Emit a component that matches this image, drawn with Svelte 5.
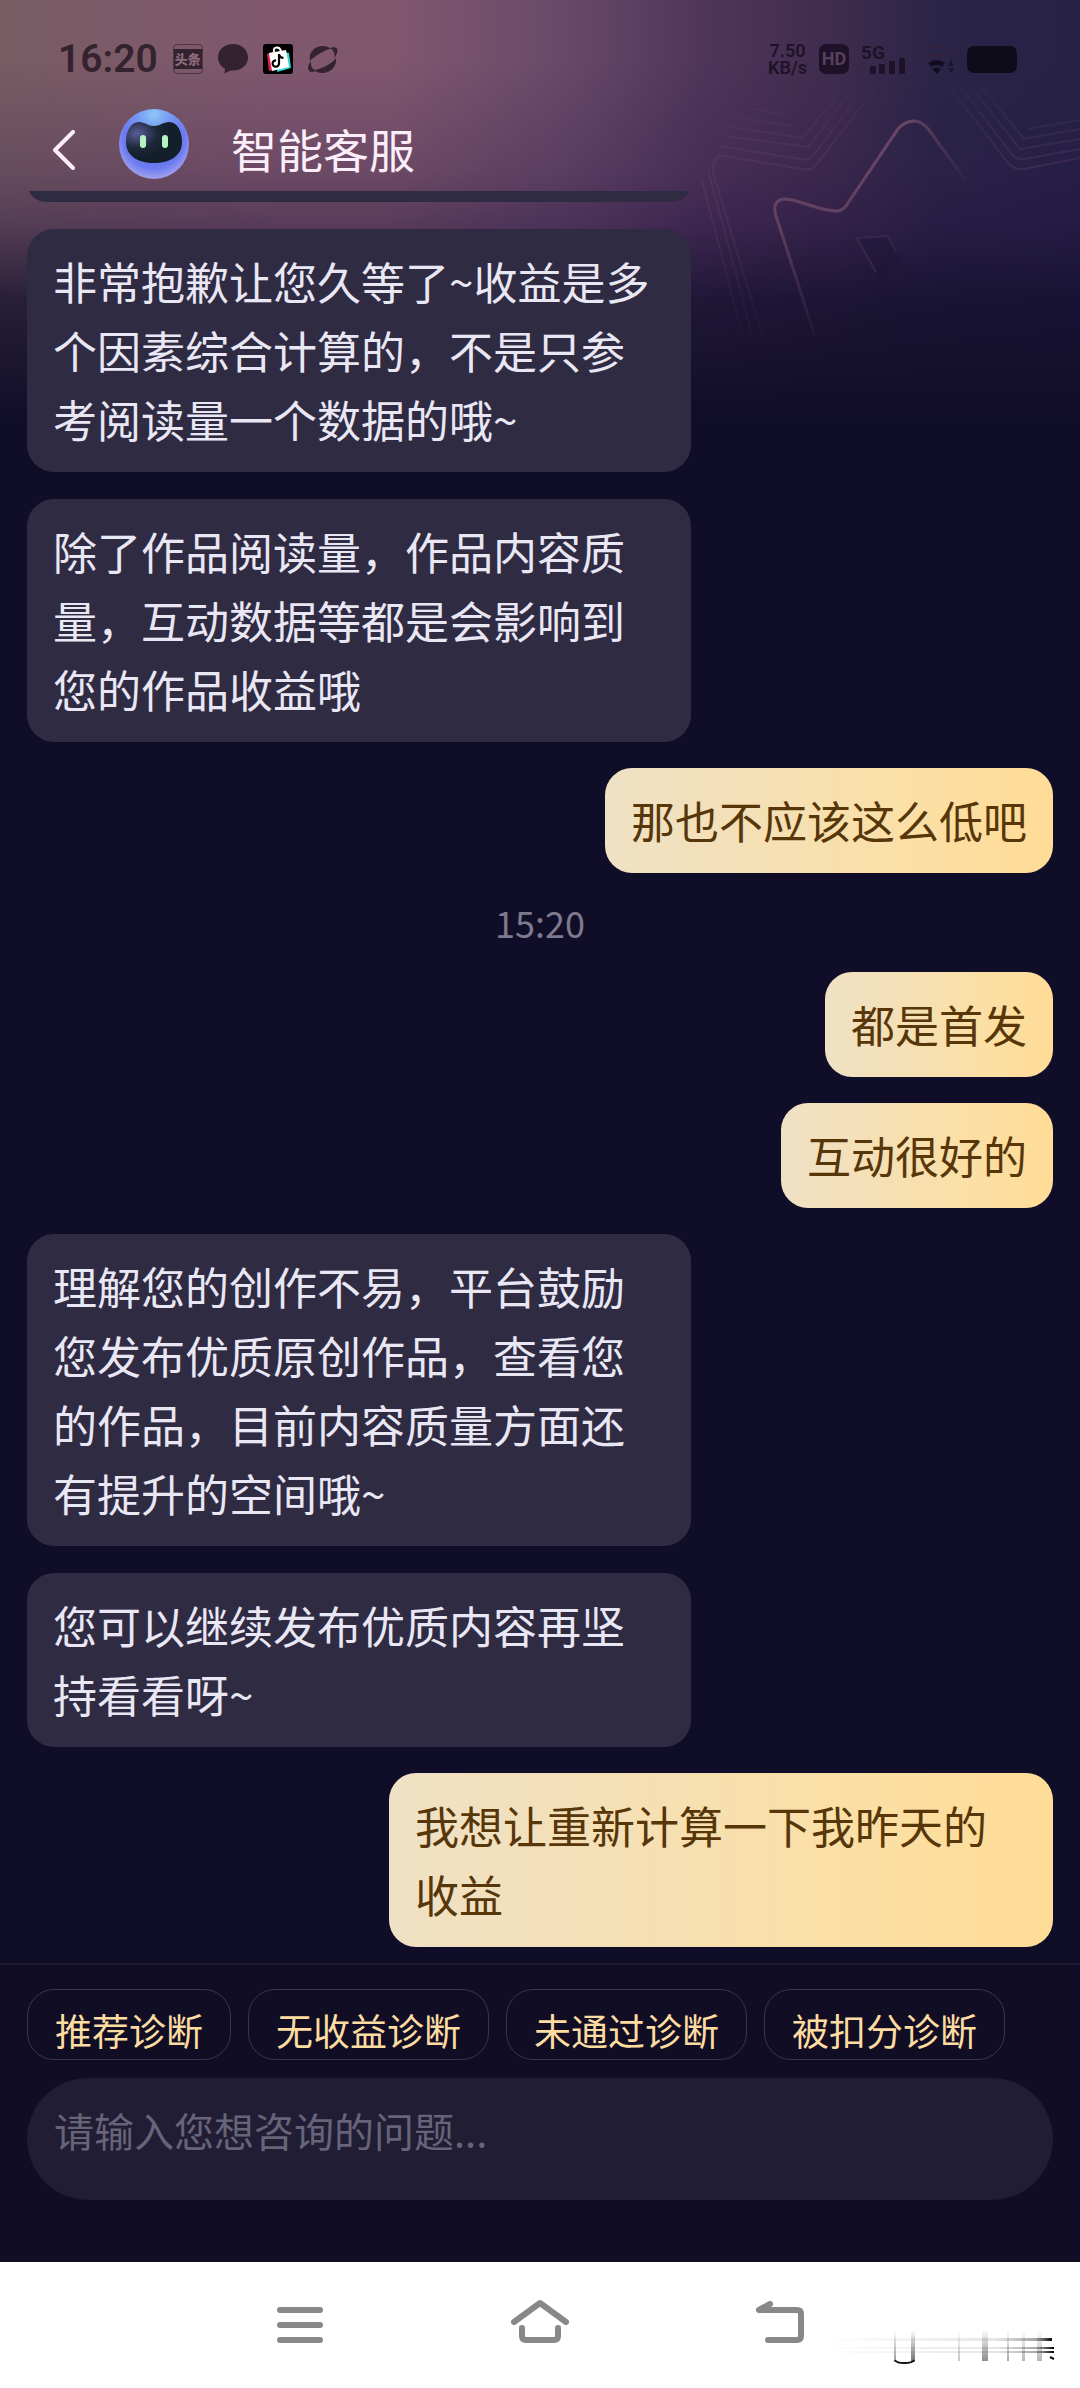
<script>
    let draft = '';

    const messages = [
      { from: 'agent', cut: true, text: '' },
      { from: 'agent', text: '非常抱歉让您久等了~收益是多个因素综合计算的，不是只参考阅读量一个数据的哦~' },
      { from: 'agent', text: '除了作品阅读量，作品内容质量，互动数据等都是会影响到您的作品收益哦' },
      { from: 'user', text: '那也不应该这么低吧' },
      { from: 'time', text: '15:20' },
      { from: 'user', text: '都是首发' },
      { from: 'user', text: '互动很好的' },
      { from: 'agent', text: '理解您的创作不易，平台鼓励您发布优质原创作品，查看您的作品，目前内容质量方面还有提升的空间哦~' },
      { from: 'agent', text: '您可以继续发布优质内容再坚持看看呀~' },
      { from: 'user', text: '我想让重新计算一下我昨天的收益' }
    ];

    const shortcuts = [ '推荐诊断', '无收益诊断', '未通过诊断', '被扣分诊断' ];
</script>

<style>
    :global(body) {
        margin: 0;
        background: #100d28;
    }

    .screen {
        position: relative;
        display: flex;
        flex-direction: column;
        min-height: 100vh;
        color: #eae7f4;
        font-family: "Noto Sans CJK SC", "Noto Sans", sans-serif;
        background:
            linear-gradient(to bottom, rgba(40, 20, 70, 0) 60px, rgba(40, 20, 70, 0.22) 170px, rgba(34, 18, 64, 0.42) 225px, rgba(20, 15, 46, 0.8) 300px, #100d28 420px),
            linear-gradient(to right, #785c63 0, #80586e 26%, #80586e 36%, #69496a 52%, #50355a 65%, #3f2c4e 77%, #2a2547 87%, #262146 100%);
        background-color: #100d28;
    }

    .star {
        position: absolute;
        top: 0;
        right: 0;
        width: 380px;
        height: 400px;
        fill: none;
    }

    button {
        margin: 0;
        padding: 0;
        border: 0;
        background: none;
        color: inherit;
        font: inherit;
    }

    svg {
        display: block;
    }

    .status {
        position: relative;
        display: flex;
        align-items: center;
        justify-content: space-between;
        height: 30px;
        padding: 44px 63px 20px 58px;
        font-family: Roboto, sans-serif;
    }

    .status-side {
        display: flex;
        align-items: center;
    }

    .status-left {
        gap: 15px;
        color: #35222f;
    }

    .status-right {
        gap: 12px;
        color: #1d1228;
    }

    .clock {
        font-size: 39px;
        font-weight: 600;
        line-height: 30px;
    }

    .speed {
        display: flex;
        flex-direction: column;
        align-items: center;
        font-size: 18px;
        font-weight: 600;
        line-height: 17px;
    }

    .badge {
        width: 30px;
        height: 30px;
        border-radius: 7px;
        background: #1d1228;
        color: #56405f;
        font-size: 18px;
        font-weight: 700;
        line-height: 30px;
        text-align: center;
    }

    .signal {
        overflow: visible;
    }

    .toutiao {
        box-sizing: border-box;
        width: 30px;
        height: 30px;
        padding: 4px 0;
        border: 1px solid #4d3544;
        border-radius: 4px;
        font-family: "Noto Sans CJK SC", sans-serif;
        font-size: 13px;
        font-weight: 900;
        line-height: 20px;
        text-align: center;
    }

    .toutiao span {
        display: block;
        background: #35222f;
        color: #8b6a7b;
    }

    .battery {
        width: 50px;
        height: 27px;
        border-radius: 7px;
        background: #0e0c18;
    }

    .header {
        position: relative;
        display: flex;
        align-items: center;
        height: 70px;
        padding: 15px 52px 12px;
    }

    .back {
        margin: 12px 43px 0 0;
    }

    .header h1 {
        margin: 8px 0 0 41px;
        color: #fbeefa;
        font-size: 46px;
        font-weight: 400;
        line-height: 56px;
    }

    .thread {
        position: relative;
        flex: 1;
        display: flex;
        flex-direction: column;
        align-items: flex-start;
        gap: 26px;
        padding: 0 27px 16px;
        overflow: hidden;
        font-size: 44px;
        line-height: 69px;
    }

    .bubble {
        box-sizing: border-box;
        max-width: 664px;
        margin: 0;
        padding: 18px 26px;
        border-radius: 27px;
    }

    .agent {
        width: 664px;
        background: #2f2b43;
    }

    .agent + .agent {
        margin-top: 1px;
    }

    .agent.cut {
        flex: none;
        height: 38px;
        margin-top: -27px;
    }

    .user {
        align-self: flex-end;
        color: #573609;
        background: linear-gradient(to right, #efe1c5, #fbdfa5 70%, #ffdc96);
    }

    .time {
        align-self: center;
        margin: 0;
        color: #7d7a8c;
        font-size: 36px;
        line-height: 47px;
    }

    .composer {
        position: relative;
        padding: 24px 27px 62px;
        border-top: 2px solid #1d1a33;
        background: #100d25;
    }

    .shortcuts {
        display: flex;
        gap: 17px;
        margin-bottom: 18px;
    }

    .shortcuts button {
        box-sizing: border-box;
        height: 71px;
        padding: 11px 27px 0;
        border: 1px solid #3b3748;
        border-radius: 27px;
        color: #fcdca0;
        font-size: 37px;
        line-height: 56px;
        white-space: nowrap;
    }

    .composer input {
        display: block;
        box-sizing: border-box;
        width: 100%;
        height: 122px;
        padding: 0 27px 18px;
        border: 0;
        border-radius: 61px;
        outline: 0;
        background: #201d34;
        color: #eae7f4;
        font-family: inherit;
        font-size: 40px;
    }

    .composer input::placeholder {
        color: #67647a;
        opacity: 1;
    }

    .nav {
        position: relative;
        display: grid;
        grid-template-columns: repeat(3, 240px);
        justify-content: center;
        height: 126px;
        background: #fff;
    }

    .nav button {
        display: grid;
        place-items: center;
    }

    .nav button svg {
        fill: none;
        stroke: #888;
        stroke-width: 6;
        stroke-linecap: round;
        stroke-linejoin: round;
    }

    .mark {
        position: absolute;
        right: 24px;
        bottom: 18px;
    }
</style>

<div class="screen">
    <svg class="star" viewBox="0 0 380 400" aria-hidden="true">
        <defs>
            <linearGradient id="edge" x1="0" y1="0" x2="0" y2="1">
                <stop offset="0" stop-color="#7a506e"/>
                <stop offset="0.5" stop-color="#6c4664"/>
                <stop offset="1" stop-color="#3a2748" stop-opacity="0.3"/>
            </linearGradient>
            <linearGradient id="tip" gradientUnits="userSpaceOnUse" x1="214" y1="120" x2="268" y2="185">
                <stop offset="0" stop-color="#6c4664"/>
                <stop offset="1" stop-color="#6c4664" stop-opacity="0"/>
            </linearGradient>
            <linearGradient id="rings" gradientUnits="userSpaceOnUse" x1="0" y1="80" x2="0" y2="335">
                <stop offset="0" stop-color="#6b4568" stop-opacity="0.2"/>
                <stop offset="0.35" stop-color="#6b4568" stop-opacity="0.9"/>
                <stop offset="1" stop-color="#6b4568" stop-opacity="0.2"/>
            </linearGradient>
        </defs>
        <path d="M115 336 L76 216 Q71 199 86 199 C100 200 122 212 138 211 Q144 210 148 203 L198 129 Q205 121 214 121" stroke="url(#edge)" stroke-width="3" opacity="0.8"/>
        <path d="M214 121 Q222 121 229 130 L266 181" stroke="url(#tip)" stroke-width="3" opacity="0.8"/>
        <path d="M157 238 L188 236 L204 262 L180 278z" fill="#1a1434" opacity="0.35"/>
        <path d="M176 272 L157 238 L188 236 L196 252" stroke="#4a3154" stroke-width="2" opacity="0.5"/>
        <g stroke="url(#rings)" stroke-width="2" opacity="0.35">
            <path d="M180 83 L115 166 Q110 171 102 169 L24 156 Q10 156 14 176 L62 334"/>
            <path d="M169 82 L112 157 Q107 161 100 159 L20 146 M8 170 L52 334"/>
            <path d="M158 82 L108 147 L24 136 M2 180 L42 334"/>
            <path d="M148 82 L103 138 L30 127"/>
            <path d="M92 126 L38 117 M86 115 L48 108"/>
            <path d="M247 84 L309 164 Q315 170 324 169 L380 158"/>
            <path d="M258 83 L313 156 Q318 160 324 159 L380 149"/>
            <path d="M268 83 L320 149 L380 139"/>
            <path d="M278 83 L324 139 L380 129 M328 129 L380 120"/>
        </g>
    </svg>

    <div class="status">
        <div class="status-side status-left">
            <span class="clock">16:20</span>
            <span class="toutiao"><span>头条</span></span>
            <svg width="30" height="30" viewBox="0 0 30 30" fill="#35222f">
                <path d="M15 0C6.500 0 0 5.800 0 13.500c0 5 2.800 8.800 7 11.200L6.500 29.500l6-3c.8.1 1.600.1 2.500.1 8.500 0 15-5.600 15-13.100S23.500 0 15 0z"/>
            </svg>
            <svg width="30" height="30" viewBox="0 0 30 30">
                <rect width="30" height="30" rx="3" fill="#000"/>
                <path d="M4 10 L12 7 L10 26 L6 27z" fill="#e8204f"/>
                <path d="M17 7 L26 9 L28 24 L14 28z" fill="#35d8d5"/>
                <path d="M6 9 L23 6 L26 23 L9 27z" fill="#fff"/>
                <path d="M11 8 Q10 3.500 14 3.500 Q17 3.500 18 7" fill="none" stroke="#fff" stroke-width="2"/>
                <path d="M16 10 V19.500 A3.200 3.200 0 1 1 13 16.300 M16 10.500 Q17 14 20.500 14" fill="none" stroke="#000" stroke-width="2.200"/>
            </svg>
            <svg width="30" height="30" viewBox="0 0 30 30" fill="#35222f">
                <path d="M2 17 C0 8 7 2 15 2 C18 2 21 3 23 5 C18 5 5 13 2 17z"/>
                <path d="M28 14 C29 23 22 29 14 29 C11 29 8 28 6 26 C12 26 25 19 28 14z"/>
                <path d="M22 4 C27 2 31 4 29 9 Q28 12 26 14 Q28 8 22 4z"/>
                <path d="M3 17 C-1 22 -1 28 4 28 L8 27 Q2 24 3 17z"/>
            </svg>
        </div>
        <div class="status-side status-right">
            <span class="speed"><span>7.50</span><span>KB/s</span></span>
            <span class="badge">HD</span>
            <svg class="signal" width="46" height="30" viewBox="0 0 46 30" fill="#1d1228">
                <text x="0" y="15" font-size="19" font-weight="700">5G</text>
                <rect x="9" y="22" width="6" height="8" rx="1"/>
                <rect x="18" y="20" width="6" height="10" rx="1"/>
                <rect x="28" y="17" width="6" height="13" rx="1"/>
                <rect x="38" y="14" width="6" height="16" rx="1"/>
            </svg>
            <svg width="36" height="30" viewBox="0 0 36 30" fill="none">
                <path d="M1 9 Q18 -5 35 9 M7 15 Q18 6 29 15" stroke="#33233f" stroke-width="3"/>
                <path d="M9 19 Q18 13 26 19 L23 23 Q18 19 12 23z M13 25 Q18 22 22 25 L18 30z" fill="#110d1e"/>
                <path d="M29 22 l3 -6 l3 6z M29 24 h6 l-3 5z" fill="#1a1430"/>
            </svg>
            <span class="battery"></span>
        </div>
    </div>

    <header class="header">
        <button class="back" aria-label="返回">
            <svg width="23" height="40" viewBox="0 0 23 40" fill="none" stroke="#fbeefa" stroke-width="4" stroke-linecap="round" stroke-linejoin="round">
                <path d="M21 2 L3 20 L21 38"/>
            </svg>
        </button>
        <svg width="72" height="70" viewBox="0 0 72 70" aria-hidden="true">
            <defs>
                <radialGradient id="ball" cx="0.5" cy="0.42" r="0.58">
                    <stop offset="0" stop-color="#5a6be0"/>
                    <stop offset="0.75" stop-color="#6c7bf0"/>
                    <stop offset="1" stop-color="#a3a2ee"/>
                </radialGradient>
                <radialGradient id="shine" cx="0.5" cy="0.08" r="0.5">
                    <stop offset="0" stop-color="#8fc8f8"/>
                    <stop offset="1" stop-color="#7aa4f4" stop-opacity="0"/>
                </radialGradient>
                <radialGradient id="face" cx="0.2" cy="0.28" r="0.6">
                    <stop offset="0" stop-color="#5a5c96"/>
                    <stop offset="0.6" stop-color="#1c2738"/>
                    <stop offset="1" stop-color="#131f2b"/>
                </radialGradient>
            </defs>
            <circle cx="36" cy="35" r="35" fill="url(#ball)"/>
            <circle cx="36" cy="35" r="35" fill="url(#shine)"/>
            <path d="M36 17 C30 17 27 13 21 13 C12 13 8 23 8 33 C8 47 20 54 36 54 C52 54 64 47 64 33 C64 23 60 13 51 13 C45 13 42 17 36 17z" fill="url(#face)"/>
            <rect x="22" y="26" width="6" height="13" rx="3" fill="#b4f5bf"/>
            <rect x="44" y="26" width="6" height="13" rx="3" fill="#b4f5bf"/>
        </svg>
        <h1>智能客服</h1>
    </header>

    <main class="thread">
        {#each messages as message}
            {#if message.from === 'time'}
                <p class="time">{message.text}</p>
            {:else}
                <p class="bubble {message.from}" class:cut={message.cut}>{message.text}</p>
            {/if}
        {/each}
    </main>

    <div class="composer">
        <div class="shortcuts">
            {#each shortcuts as shortcut}
                <button on:click={() => draft = shortcut}>{shortcut}</button>
            {/each}
        </div>
        <input type="text" aria-label="咨询的问题" placeholder="请输入您想咨询的问题..." bind:value={draft}/>
    </div>

    <nav class="nav">
        <button aria-label="菜单">
            <svg width="52" height="52" viewBox="0 0 52 52">
                <path d="M6 11 H46 M6 26 H46 M6 41 H46"/>
            </svg>
        </button>
        <button aria-label="主页">
            <svg width="60" height="52" viewBox="0 0 60 52">
                <path d="M4 23 L30 4 L56 23 M12 29 V37 Q12 41 16 41 H44 Q48 41 48 37 V29"/>
            </svg>
        </button>
        <button aria-label="后退">
            <svg width="52" height="52" viewBox="0 0 52 52">
                <path d="M16 5 L5 11 H43 Q47 11 47 15 V37 Q47 41 43 41 H14"/>
            </svg>
        </button>
        <svg class="mark" width="232" height="44" viewBox="0 0 232 44" aria-hidden="true">
            <defs>
                <linearGradient id="across">
                    <stop offset="0" stop-color="#555" stop-opacity="0"/>
                    <stop offset="0.75" stop-color="#555" stop-opacity="0.15"/>
                    <stop offset="0.93" stop-color="#333" stop-opacity="0.45"/>
                    <stop offset="1" stop-color="#000"/>
                </linearGradient>
                <linearGradient id="down" x1="0" y1="0" x2="0" y2="1">
                    <stop offset="0" stop-color="#333" stop-opacity="0"/>
                    <stop offset="1" stop-color="#333" stop-opacity="0.7"/>
                </linearGradient>
            </defs>
            <g fill="url(#across)">
                <rect x="4" y="12" width="224" height="3"/>
                <rect x="0" y="21" width="230" height="2"/>
                <rect x="0" y="25" width="230" height="2"/>
            </g>
            <g fill="url(#down)">
                <rect x="70" y="4" width="2" height="32" opacity="0.7"/>
                <rect x="87" y="4" width="4" height="32"/>
                <rect x="134" y="4" width="2" height="31" opacity="0.4"/>
                <rect x="158" y="4" width="6" height="31" opacity="0.8"/>
                <rect x="183" y="4" width="2" height="31" opacity="0.6"/>
                <rect x="198" y="4" width="3" height="31" opacity="0.5"/>
                <rect x="213" y="4" width="5" height="31" opacity="0.5"/>
            </g>
            <path d="M71 34 Q72 37 80 37 Q89 37 90 34" fill="none" stroke="#111" stroke-width="2"/>
            <path d="M226 31 l4 2" stroke="#111" stroke-width="2"/>
        </svg>
    </nav>
</div>
